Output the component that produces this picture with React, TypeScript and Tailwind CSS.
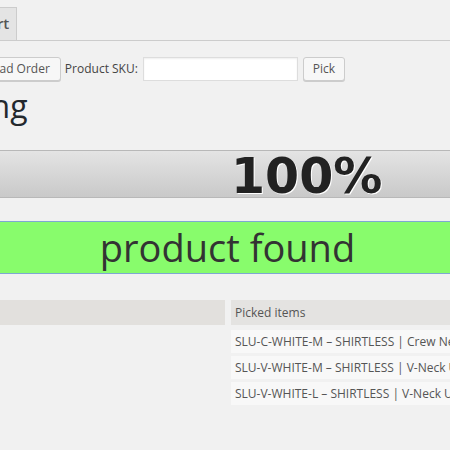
const items = [
  "SLU-C-WHITE-M – SHIRTLESS | Crew Neck Undershirt",
  "SLU-V-WHITE-M – SHIRTLESS | V-Neck Undershirt",
  "SLU-V-WHITE-L – SHIRTLESS | V-Neck Undershirt",
];

export default function App() {
  return (
    <div className="w-[450px] h-[450px] overflow-hidden bg-[#f1f1f1] text-[#444] font-['Open_Sans',sans-serif]">
      {/* Tabs */}
      <div className="pt-[7px] border-b border-[#cccccc] flex">
        <div className="-ml-[37px] h-[33px] pl-[10px] pr-[7px] pt-[3px] bg-[#e4e4e4] border border-b-0 border-[#cccccc] text-[15px] leading-[24px] font-semibold text-[#555] whitespace-nowrap">
          Start
        </div>
      </div>

      {/* Picker form */}
      <div className="mt-[16px] flex items-center h-[24px] whitespace-nowrap">
        <button className="-ml-[25px] h-[24px] px-[10px] bg-[#f7f7f7] border border-[#cccccc] rounded-[3px] shadow-[0_1px_0_#cccccc] text-[12px] leading-[22px] text-[#555]">
          Load Order
        </button>
        <span className="ml-[4px] text-[12px] leading-[24px] text-[#444]">Product SKU:</span>
        <input
          type="text"
          className="ml-[5px] w-[155px] h-[24px] bg-white border border-[#dddddd] shadow-[inset_0_1px_2px_rgba(0,0,0,0.07)] outline-none"
        />
        <button className="ml-[5px] w-[42px] h-[24px] bg-[#f7f7f7] border border-[#cccccc] rounded-[3px] shadow-[0_1px_0_#cccccc] text-[12px] leading-[22px] text-[#555]">
          Pick
        </button>
      </div>

      <h2 className="-ml-[77px] mt-[5px] text-[32px] leading-[40px] font-normal text-[#23282d] whitespace-nowrap">
        Picking
      </h2>

      {/* Progress */}
      <div className="mt-[24px] h-[48px] overflow-hidden border-y border-[#b8b8b8] bg-gradient-to-b from-[#e4e4e4] to-[#c9c9c9]">
        <div className="pl-[231px] pt-[3px] text-[49px] leading-[46px] font-bold text-[#222] font-['DejaVu_Sans',sans-serif] [text-shadow:1px_1px_0_#ffffff] whitespace-nowrap">
          100%
        </div>
      </div>

      {/* Status */}
      <div className="mt-[23px] h-[53px] pl-[5px] border-y border-[#7ea8d2] bg-[#88fc6c] flex justify-center">
        <span className="text-[38px] leading-[51px] text-[#333] whitespace-nowrap">product found</span>
      </div>

      {/* Tables */}
      <div className="mt-[26px] flex gap-[6px] text-[12px] text-[#555]">
        <div className="w-[225px] shrink-0">
          <div className="h-[25px] bg-[#e2e0dd]" />
        </div>
        <div className="w-[300px] shrink-0">
          <div className="h-[25px] bg-[#e4e3e1] pl-[4px] leading-[25px]">Picked items</div>
          <div className="mt-[5px] flex flex-col gap-[3px]">
            {items.map((item) => (
              <div key={item} className="h-[23px] bg-[#f8f8f8] pl-[4px] leading-[23px] whitespace-nowrap overflow-hidden">
                {item}
              </div>
            ))}
          </div>
        </div>
      </div>
    </div>
  );
}
